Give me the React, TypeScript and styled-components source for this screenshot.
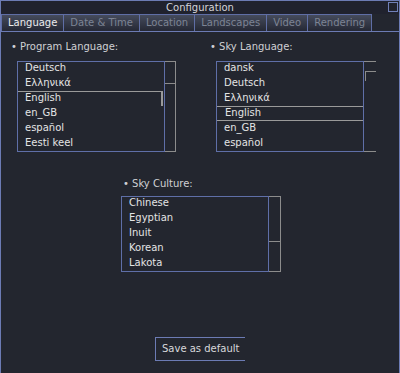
import styled, { createGlobalStyle } from "styled-components";

const GlobalStyle = createGlobalStyle`
  html, body {
    margin: 0;
    padding: 0;
    background: #23262f;
  }
  * {
    box-sizing: border-box;
  }
`;

const Window = styled.div`
  width: 400px;
  height: 373px;
  display: flex;
  flex-direction: column;
  background: #23262f;
  border: 1px solid #6c7bb4;
  border-bottom: none;
  font-family: "DejaVu Sans", "Liberation Sans", sans-serif;
  font-size: 10px;
  color: #dcdcdc;
  overflow: hidden;
`;

const TitleBar = styled.div`
  height: 13px;
  display: flex;
  align-items: center;
  position: relative;
  background: #20222e;
`;

const Title = styled.div`
  flex: 1;
  text-align: center;
  line-height: 13px;
  color: #d4d4d8;
`;

const CloseBox = styled.div`
  position: absolute;
  right: 1px;
  top: 1px;
  width: 10px;
  height: 10px;
  border: 1px solid #7080b8;
`;

const TabBar = styled.div`
  display: flex;
  height: 18px;
  border-bottom: 1px solid #6c7bb4;
`;

const Tab = styled.div<{ $active?: boolean }>`
  height: 17px;
  padding: 0 6px;
  line-height: 16px;
  border: 1px solid #5f6ea6;
  border-bottom: none;
  margin-right: -1px;
  background: linear-gradient(#454b5c, #252834);
  color: ${(p) => (p.$active ? "#ececec" : "#7d8494")};
  white-space: nowrap;
`;

const Content = styled.div`
  flex: 1;
  display: flex;
  flex-direction: column;
  padding-top: 8px;
`;

const TopRow = styled.div`
  display: flex;
  padding-left: 8px;
`;

const Group = styled.div<{ $width?: number }>`
  width: ${(p) => (p.$width ? `${p.$width}px` : "auto")};
  display: flex;
  flex-direction: column;
`;

const Label = styled.div<{ $indent: number }>`
  height: 14px;
  line-height: 14px;
  padding-left: ${(p) => p.$indent}px;
  color: #cfd0d4;
  white-space: nowrap;
`;

const ListRow = styled.div<{ $indent: number; $top: number }>`
  display: flex;
  margin-left: ${(p) => p.$indent}px;
  margin-top: ${(p) => p.$top}px;
`;

const ListBox = styled.div<{ $height: number }>`
  width: 148px;
  height: ${(p) => p.$height}px;
  border: 1px solid #5f6fa8;
  overflow: hidden;
`;

const Items = styled.div`
  margin-top: -1px;
`;

const Item = styled.div<{ $selected?: "box" | "corner" }>`
  height: 15px;
  line-height: 13px;
  padding-left: 7px;
  padding-bottom: 2px;
  color: #e4e4e4;
  white-space: nowrap;
  ${(p) =>
    p.$selected === "box" &&
    `border: 1px solid #9a9a9a; margin-left: -1px; margin-right: -1px; padding-left: 8px; line-height: 12px;`}
  ${(p) =>
    p.$selected === "corner" &&
    `border-top: 1px solid #9a9a9a; border-right: 2px solid #9a9a9a; margin-right: 1px; line-height: 12px;`}
`;

const Scrollbar = styled.div<{ $framed?: boolean; $width: number }>`
  width: ${(p) => p.$width}px;
  display: flex;
  flex-direction: column;
  border: 1px solid #8c8c8c;
  border-left: none;
  ${(p) => !p.$framed && `border-right: none;`}
`;

const ThumbGap = styled.div<{ $h: number }>`
  height: ${(p) => p.$h}px;
`;

const Thumb = styled.div<{ $h: number; $style: "bottom" | "corner" }>`
  height: ${(p) => p.$h}px;
  ${(p) =>
    p.$style === "bottom"
      ? `border-bottom: 1px solid #8c8c8c;`
      : `border-top: 1px solid #8c8c8c; border-left: 1px solid #8c8c8c; margin-left: 1px;`}
`;

const CultureSection = styled.div`
  display: flex;
  padding-left: 112px;
  margin-top: 25px;
`;

const Footer = styled.div`
  display: flex;
  padding-left: 154px;
  margin-top: 65px;
`;

const Button = styled.div`
  width: 90px;
  height: 24px;
  line-height: 22px;
  padding-left: 6px;
  border: 1px solid #6c7bb4;
  border-right: none;
  color: #d8d8dc;
  white-space: nowrap;
`;

const tabs = ["Language", "Date & Time", "Location", "Landscapes", "Video", "Rendering"];

export default function App() {
  return (
    <>
      <GlobalStyle />
      <Window>
        <TitleBar>
          <Title>Configuration</Title>
          <CloseBox />
        </TitleBar>
        <TabBar>
          {tabs.map((t, i) => (
            <Tab key={t} $active={i === 0}>
              {t}
            </Tab>
          ))}
        </TabBar>
        <Content>
          <TopRow>
            <Group $width={200}>
              <Label $indent={2}>• Program Language:</Label>
              <ListRow $indent={8} $top={7}>
                <ListBox $height={91}>
                  <Items>
                    <Item>Deutsch</Item>
                    <Item>Ελληνικά</Item>
                    <Item $selected="corner">English</Item>
                    <Item>en_GB</Item>
                    <Item>español</Item>
                    <Item>Eesti keel</Item>
                  </Items>
                </ListBox>
                <Scrollbar $framed $width={11}>
                  <Thumb $h={22} $style="bottom" />
                </Scrollbar>
              </ListRow>
            </Group>
            <Group>
              <Label $indent={1}>• Sky Language:</Label>
              <ListRow $indent={7} $top={7}>
                <ListBox $height={91}>
                  <Items>
                    <Item>dansk</Item>
                    <Item>Deutsch</Item>
                    <Item>Ελληνικά</Item>
                    <Item $selected="box">English</Item>
                    <Item>en_GB</Item>
                    <Item>español</Item>
                  </Items>
                </ListBox>
                <Scrollbar $width={12}>
                  <ThumbGap $h={9} />
                  <Thumb $h={10} $style="corner" />
                </Scrollbar>
              </ListRow>
            </Group>
          </TopRow>
          <CultureSection>
            <Group>
              <Label $indent={10}>• Sky Culture:</Label>
              <ListRow $indent={8} $top={5}>
                <ListBox $height={76}>
                  <Items>
                    <Item>Chinese</Item>
                    <Item>Egyptian</Item>
                    <Item>Inuit</Item>
                    <Item>Korean</Item>
                    <Item>Lakota</Item>
                  </Items>
                </ListBox>
                <Scrollbar $framed $width={12}>
                  <Thumb $h={45} $style="bottom" />
                </Scrollbar>
              </ListRow>
            </Group>
          </CultureSection>
          <Footer>
            <Button>Save as default</Button>
          </Footer>
        </Content>
      </Window>
    </>
  );
}
